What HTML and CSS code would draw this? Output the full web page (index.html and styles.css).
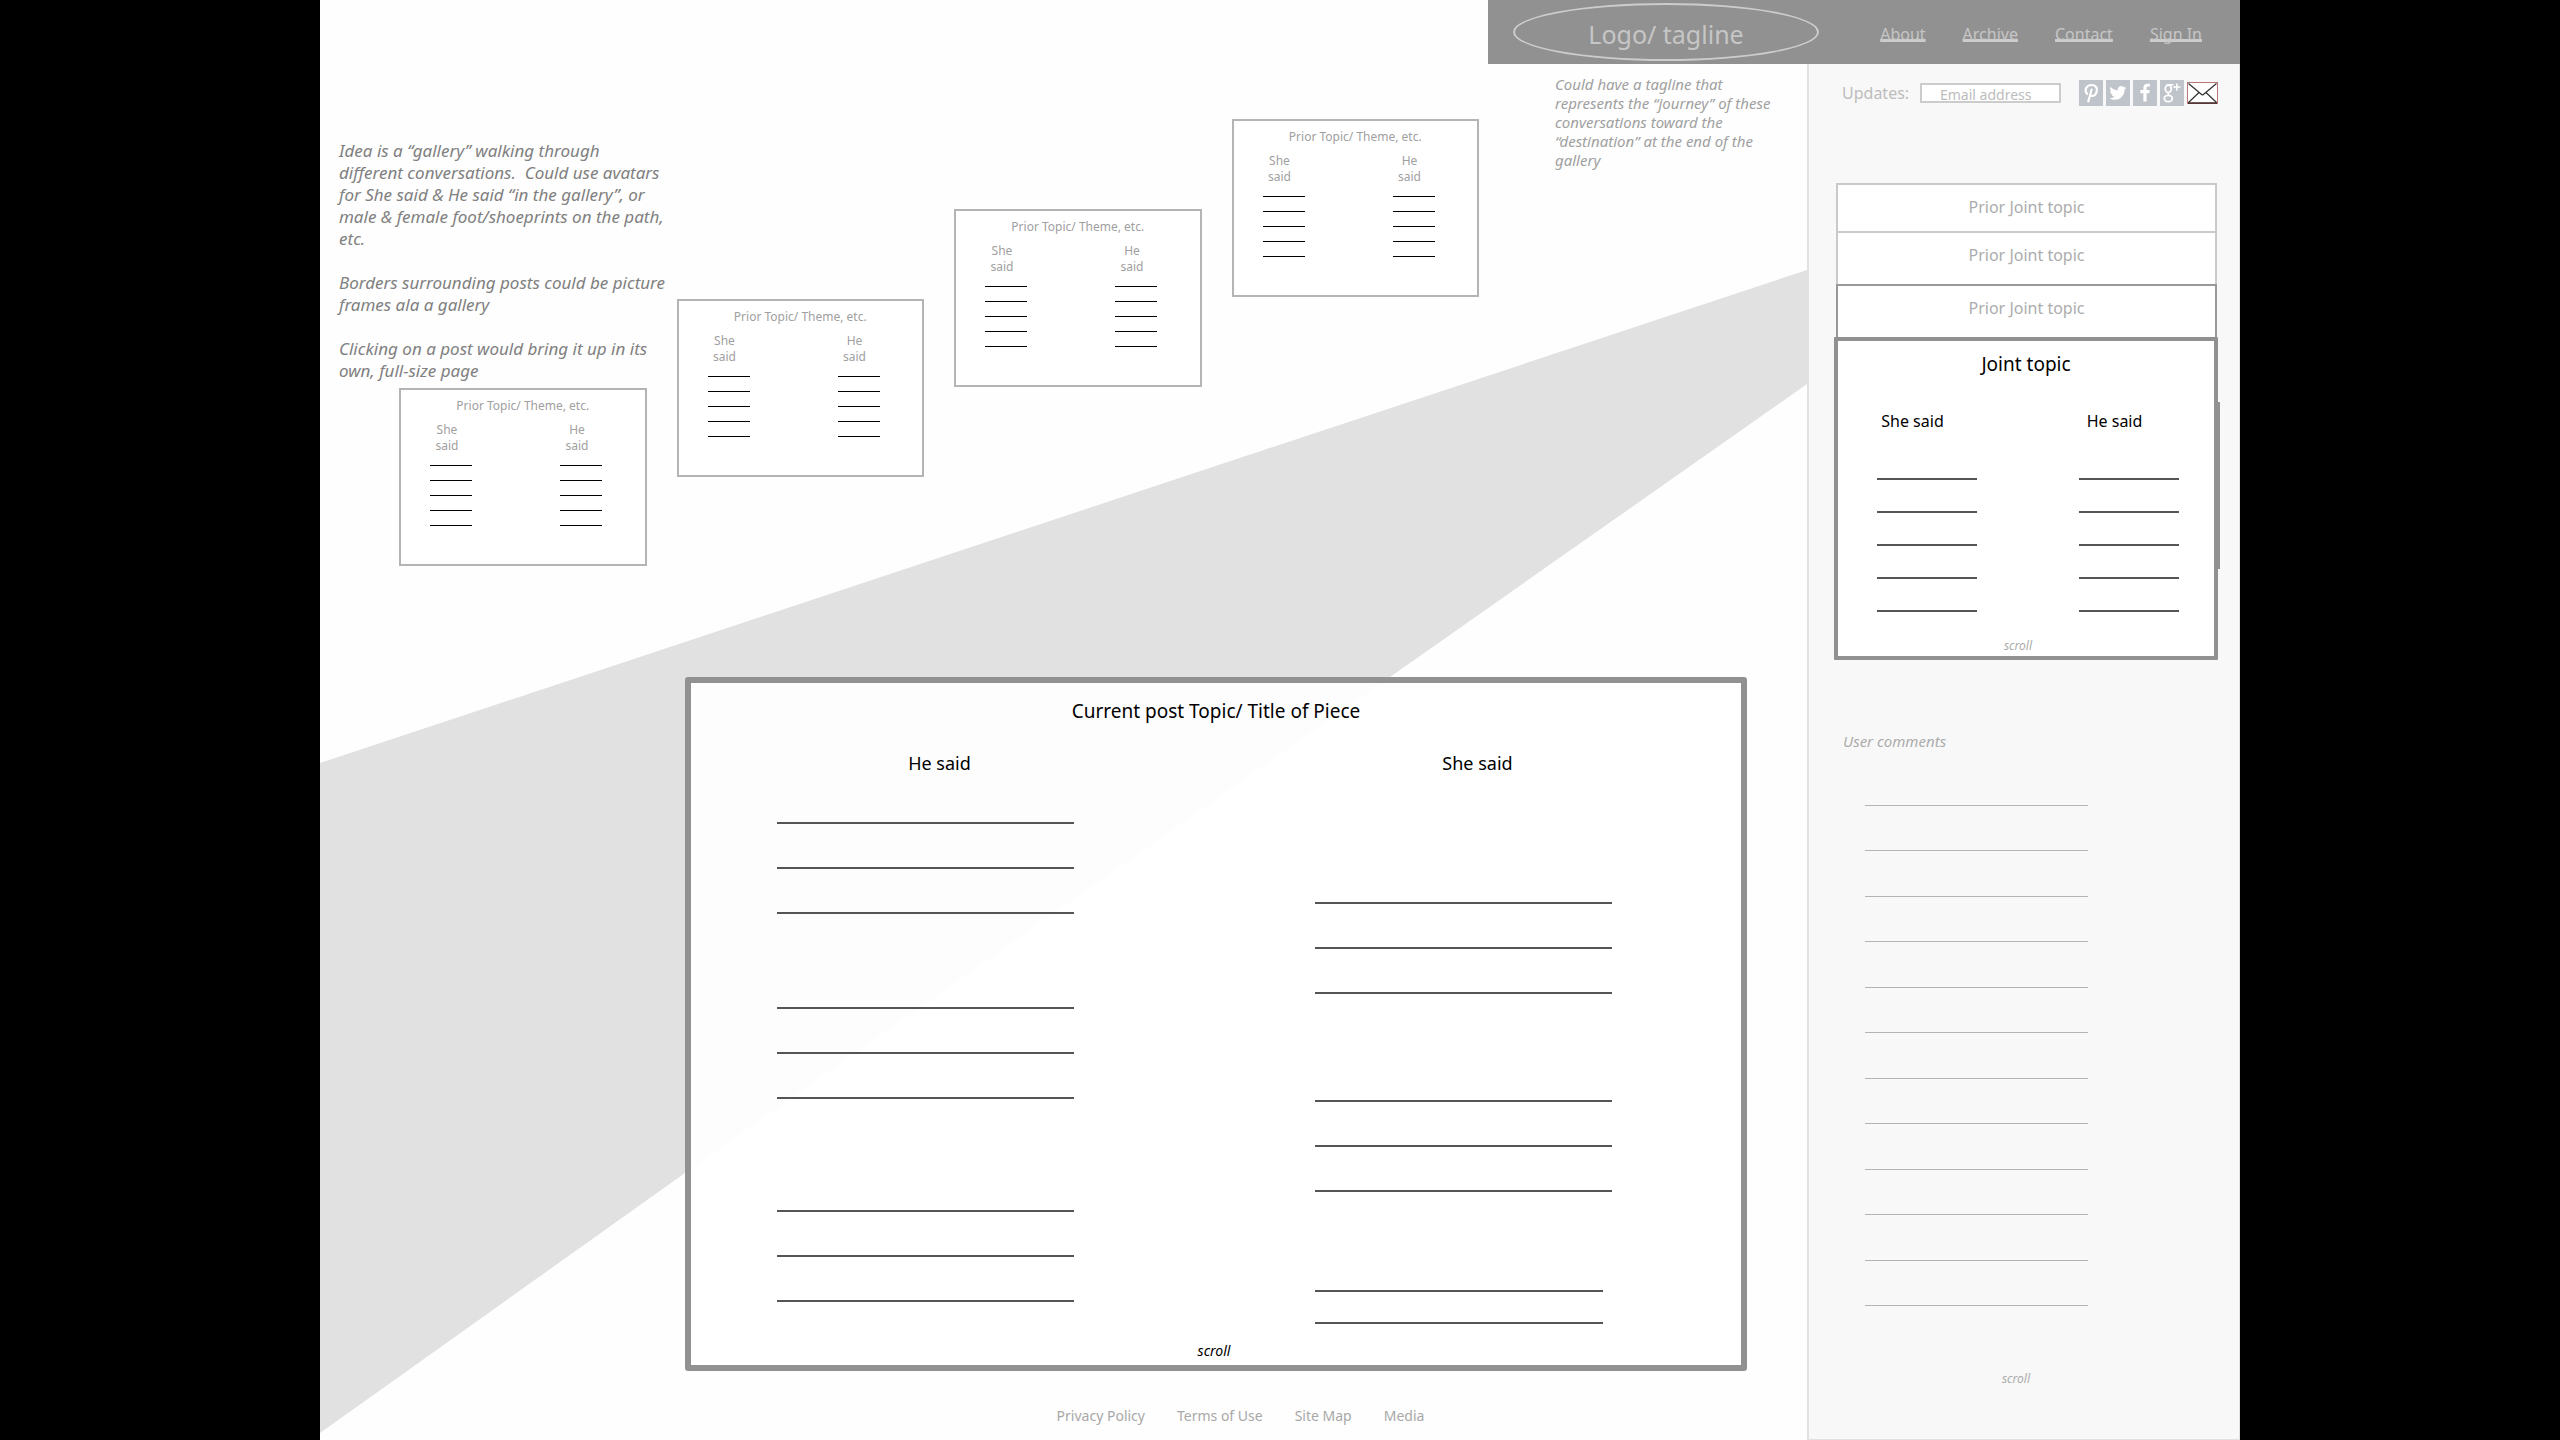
FILE: index.html
```
<!DOCTYPE html>
<html lang="en">
<head>
<meta charset="utf-8">
<meta name="viewport" content="width=device-width, initial-scale=1">
<title>She said / He said</title>
<link rel="stylesheet" href="styles.css">
</head>
<body>
<div class="page">
  <header class="topbar">
    <div class="topbar-inner">
      <a class="logo" href="#">Logo/ tagline</a>
      <nav class="topnav" aria-label="Main">
        <a href="#">About</a>
        <a href="#">Archive</a>
        <a href="#">Contact</a>
        <a href="#">Sign In</a>
      </nav>
    </div>
  </header>

  <main class="main">
    <svg class="path" viewBox="0 0 1487 1376" preserveAspectRatio="none" aria-hidden="true">
      <polygon points="0,699 1487,206 1487,320 1070,613 365,1109 0,1369" fill="#e1e1e1"/>
    </svg>

    <div class="hero">
      <div class="notes">
        <p>Idea is a “gallery” walking through<br>different conversations.&nbsp; Could use avatars<br>for She said &amp; He said “in the gallery”, or<br>male &amp; female foot/shoeprints on the path,<br>etc.</p>
        <p>Borders surrounding posts could be picture<br>frames ala a gallery</p>
        <p>Clicking on a post would bring it up in its<br>own, full-size page</p>
      </div>

      <div class="gallery">
        <article class="thumb">
          <h2>Prior Topic/ Theme, etc.</h2>
          <div class="thumb-cols">
            <section><h3>She<br>said</h3><ul class="rules"><li></li><li></li><li></li><li></li><li></li></ul></section>
            <section><h3>He<br>said</h3><ul class="rules"><li></li><li></li><li></li><li></li><li></li></ul></section>
          </div>
        </article>
        <article class="thumb">
          <h2>Prior Topic/ Theme, etc.</h2>
          <div class="thumb-cols">
            <section><h3>She<br>said</h3><ul class="rules"><li></li><li></li><li></li><li></li><li></li></ul></section>
            <section><h3>He<br>said</h3><ul class="rules"><li></li><li></li><li></li><li></li><li></li></ul></section>
          </div>
        </article>
        <article class="thumb">
          <h2>Prior Topic/ Theme, etc.</h2>
          <div class="thumb-cols">
            <section><h3>She<br>said</h3><ul class="rules"><li></li><li></li><li></li><li></li><li></li></ul></section>
            <section><h3>He<br>said</h3><ul class="rules"><li></li><li></li><li></li><li></li><li></li></ul></section>
          </div>
        </article>
        <article class="thumb">
          <h2>Prior Topic/ Theme, etc.</h2>
          <div class="thumb-cols">
            <section><h3>She<br>said</h3><ul class="rules"><li></li><li></li><li></li><li></li><li></li></ul></section>
            <section><h3>He<br>said</h3><ul class="rules"><li></li><li></li><li></li><li></li><li></li></ul></section>
          </div>
        </article>
      </div>

      <p class="tagline-note">Could have a tagline that<br>represents the “journey” of these<br>conversations toward the<br>“destination” at the end of the<br>gallery</p>
    </div>

    <article class="post">
      <h1>Current post Topic/ Title of Piece</h1>
      <div class="post-cols">
        <section>
          <h2>He said</h2>
          <ul class="rules"><li></li><li></li><li></li></ul>
          <ul class="rules gap-s"><li></li><li></li><li></li></ul>
          <ul class="rules gap-l"><li></li><li></li><li></li></ul>
        </section>
        <section class="reply">
          <h2>She said</h2>
          <ul class="rules"><li></li><li></li><li></li></ul>
          <ul class="rules gap-m"><li></li><li></li><li></li></ul>
          <ul class="rules gap-l closing"><li></li><li></li></ul>
        </section>
      </div>
      <p class="scroll">scroll</p>
    </article>

    <footer class="footer">
      <a href="#">Privacy Policy</a>
      <a href="#">Terms of Use</a>
      <a href="#">Site Map</a>
      <a href="#">Media</a>
    </footer>
  </main>

  <aside class="sidebar">
    <form class="updates">
      <label for="email">Updates:</label>
      <input id="email" type="email" placeholder="Email address">
      <div class="social">
        <a href="#" aria-label="Pinterest"><svg viewBox="0 0 24 26"><rect width="24" height="26" fill="#bfc4ca"/><path d="M9.300 21.500 12.600 9.500M8 13.800C4.800 10 7.500 5 12.500 5c4 0 6 2.500 5.300 6-.6 3.600-3 5.400-5 4.900-1.200-.3-1.700-1.200-1.700-1.200" fill="none" stroke="#fff" stroke-width="2.200" stroke-linecap="round"/></svg></a>
        <a href="#" aria-label="Twitter"><svg viewBox="0 0 24 26"><rect width="24" height="26" fill="#bfc4ca"/><path transform="translate(3.500 4.500) scale(.7)" d="M23.950 4.570a10 10 0 0 1-2.820.770 4.960 4.960 0 0 0 2.160-2.720c-.950.550-2 .950-3.130 1.180a4.920 4.920 0 0 0-8.380 4.480C7.690 8.090 4.070 6.130 1.640 3.160a4.920 4.920 0 0 0 1.520 6.570 4.900 4.900 0 0 1-2.230-.610v.060a4.920 4.920 0 0 0 3.950 4.830 5 5 0 0 1-2.210.080 4.930 4.930 0 0 0 4.600 3.420A9.870 9.870 0 0 1 0 19.540a14 14 0 0 0 7.550 2.210c9.050 0 14-7.500 14-13.980 0-.210 0-.420-.020-.630a9.940 9.940 0 0 0 2.460-2.550z" fill="#fff"/></svg></a>
        <a href="#" aria-label="Facebook"><svg viewBox="0 0 24 26"><rect width="24" height="26" fill="#bfc4ca"/><path d="M13.600 21.500v-8.300h2.700l.4-3.200h-3.100V8.100c0-.9.3-1.500 1.600-1.500h1.700V3.800c-.3 0-1.300-.1-2.500-.1-2.400 0-4 1.500-4 4.100V10H7.300v3.200h3.100v8.300z" fill="#fff"/></svg></a>
        <a href="#" aria-label="Google Plus"><svg viewBox="0 0 24 26"><rect width="24" height="26" fill="#bfc4ca"/><g fill="none" stroke="#fff"><ellipse cx="8.300" cy="8.700" rx="3" ry="3.700" stroke-width="1.800"/><path d="M13.500 4.800H9M9 12.400c-1.500 1.200-1 2 .5 2.900" stroke-width="1.600"/><ellipse cx="8.300" cy="18.500" rx="4" ry="3.200" stroke-width="1.800"/><path d="M16.800 3.500v7M13.300 7h7" stroke-width="1.600"/></g></svg></a>
        <a class="mail" href="#" aria-label="Email"><svg viewBox="0 0 31 22"><rect x=".5" y=".5" width="30" height="21" fill="#fff" stroke="#b87878"/><path d="M1.500 1.500 14 12q1.500 1.500 3 0L29.500 1.500M1.500 20.500 12 10.500M29.500 20.500 19 10.500" fill="none" stroke="#333" stroke-width="1.200"/><path d="M1 21h29" stroke="#3a2020" stroke-width="1.500"/></svg></a>
      </div>
    </form>

    <section class="stack">
      <ul class="prior">
        <li><a href="#">Prior Joint topic</a></li>
        <li><a href="#">Prior Joint topic</a></li>
        <li><a href="#">Prior Joint topic</a></li>
      </ul>
      <article class="joint">
        <h2>Joint topic</h2>
        <div class="joint-cols">
          <section><h3>She said</h3><ul class="rules"><li></li><li></li><li></li><li></li><li></li></ul></section>
          <section><h3>He said</h3><ul class="rules"><li></li><li></li><li></li><li></li><li></li></ul></section>
        </div>
        <p class="scroll">scroll</p>
      </article>
    </section>

    <section class="comments">
      <h2>User comments</h2>
      <ul class="rules"><li></li><li></li><li></li><li></li><li></li><li></li><li></li><li></li><li></li><li></li><li></li><li></li></ul>
      <p class="scroll">scroll</p>
    </section>
  </aside>
</div>
</body>
</html>
```
FILE: styles.css
```
* {
  box-sizing: border-box;
}

body,
h1,
h2,
h3,
p,
ul {
  margin: 0;
  padding: 0;
}

body {
  background: #000;
  font-family: "Noto Sans", "Open Sans", sans-serif;
  font-size: 16px;
  line-height: 22px;
  color: #000;
}

h1,
h2,
h3 {
  font-weight: 400;
}

ul {
  list-style: none;
}

a {
  color: inherit;
  text-decoration: none;
}

.page {
  display: grid;
  grid-template-columns: minmax(0, 1fr) 433px;
  grid-template-rows: auto 1fr;
  width: 75%;
  min-height: 100vh;
  margin: 0 auto;
  background: #fefefe;
}

/* Top bar */

.topbar {
  grid-column: 1 / -1;
  display: flex;
  justify-content: flex-end;
}

.topbar-inner {
  display: flex;
  align-items: center;
  justify-content: space-between;
  width: 752px;
  height: 64px;
  padding: 0 38px 0 25px;
  background: #919191;
  color: #c6c6c6;
}

.logo {
  display: flex;
  align-items: center;
  justify-content: center;
  width: 306px;
  height: 58px;
  padding-top: 4px;
  border: 2px solid #ccc;
  border-radius: 50%;
  font-size: 25px;
  line-height: 32px;
}

.topnav {
  display: flex;
  gap: 37px;
  padding-top: 4px;
}

.topnav a {
  text-decoration: underline 3px #ccc;
  text-underline-offset: -1px;
  text-decoration-skip-ink: none;
}

/* Gallery area */

.main {
  position: relative;
  isolation: isolate;
}

.path {
  position: absolute;
  inset: 0;
  z-index: -1;
  width: 100%;
  height: 100%;
}

.hero {
  display: grid;
}

.hero > * {
  grid-area: 1 / 1;
}

.notes {
  justify-self: start;
  padding: 76px 0 0 19px;
  font-size: 17px;
  font-style: italic;
  color: #808080;
}

.notes p + p {
  margin-top: 22px;
}

.tagline-note {
  justify-self: end;
  width: 224px;
  margin: 11px 28px 0 0;
  font-size: 15px;
  font-style: italic;
  line-height: 19px;
  color: #a0a0a0;
  white-space: nowrap;
}

.gallery {
  display: grid;
  grid-template-columns: repeat(4, minmax(0, 1fr));
  align-items: start;
  gap: 30px;
  padding: 55px 328px 0 79px;
}

.thumb {
  height: 178px;
  padding-top: 8px;
  border: 2px solid #b4b4b4;
  background: #fff;
  font-size: 12px;
  line-height: 16px;
  color: #a0a0a0;
  text-align: center;
}

.thumb:nth-child(1) {
  margin-top: 269px;
}

.thumb:nth-child(2) {
  margin-top: 180px;
}

.thumb:nth-child(3) {
  margin-top: 90px;
}

.thumb h2 {
  font-size: 12px;
}

.thumb-cols {
  display: grid;
  grid-template-columns: 42px 42px;
  gap: 88px;
  padding: 8px 0 0 29px;
}

.thumb-cols h3 {
  padding-right: 8px;
  font-size: 12px;
}

.rules li {
  border-bottom: 2px solid #555;
}

.thumb .rules li {
  height: 15px;
  border-bottom: 1px solid #000;
}

.thumb .rules li:first-child {
  height: 12px;
}

/* Current post */

.post {
  margin: 111px 60px 0 365px;
  padding: 16px 129px 4px 86px;
  border: 6px solid #919191;
  border-radius: 3px;
  background: rgba(255, 255, 255, 0.93);
}

.post h1 {
  padding-left: 43px;
  font-size: 19px;
  line-height: 24px;
  text-align: center;
}

.post-cols {
  display: grid;
  grid-template-columns: 1fr 1fr;
  gap: 241px;
  padding-top: 28px;
}

.post-cols h2 {
  margin-bottom: 4px;
  padding-left: 28px;
  font-size: 18px;
  line-height: 24px;
  text-align: center;
}

.post-cols .reply h2 {
  margin-bottom: 84px;
}

.post .rules li {
  height: 45px;
}

.post .gap-s {
  margin-top: 50px;
}

.post .gap-m {
  margin-top: 63px;
}

.post .gap-l {
  margin-top: 68px;
}

.post .closing li {
  width: 97%;
  height: 32px;
}

.scroll {
  font-size: 12px;
  font-style: italic;
  line-height: 16px;
  text-align: center;
}

.post .scroll {
  margin-top: 17px;
  padding-left: 39px;
  font-size: 14px;
  line-height: 20px;
}

.footer {
  display: flex;
  justify-content: center;
  gap: 32px;
  padding: 35px 0 14px 354px;
  font-size: 14px;
  line-height: 20px;
  color: #a8a8a8;
}

/* Sidebar */

.sidebar {
  border: solid #e1e1e1;
  border-width: 0 1px 1px 2px;
  background: #f8f8f8;
  color: #acacac;
}

.updates {
  display: flex;
  align-items: center;
  padding: 16px 22px 0 33px;
}

.updates label {
  width: 67px;
  color: #bcbcbc;
}

.updates input {
  width: 141px;
  height: 20px;
  margin: 0 18px 0 11px;
  padding: 3px 0 0 18px;
  border: 2px solid #ccc;
  background: #fff;
  font: 14px/16px "Noto Sans", "Open Sans", sans-serif;
}

.updates input::placeholder {
  color: #bcbcbc;
  opacity: 1;
}

.social {
  display: flex;
  align-items: center;
  gap: 3px;
}

.social svg {
  display: block;
  width: 24px;
  height: 26px;
}

.social .mail svg {
  width: 31px;
  height: 22px;
}

.stack {
  padding: 77px 21px 0 25px;
}

.prior {
  margin: 0 1px 0 2px;
  text-align: center;
}

.prior li {
  height: 53px;
  padding-top: 11px;
  border: 2px solid #cacaca;
  border-bottom: 0;
  background: #fff;
}

.prior li:first-child {
  height: 48px;
}

.prior li:last-child {
  border-color: #999;
}

.joint {
  position: relative;
  padding: 11px 35px 2px 39px;
  border: 4px solid #919191;
  border-radius: 1px;
  background: #fff;
}

/* Edge of the scroll thumb that sticks out past the frame */
.joint::after {
  content: "";
  position: absolute;
  top: 61px;
  right: -6px;
  bottom: 87px;
  width: 2px;
  background: #919191;
}

.joint h2 {
  padding-right: 4px;
  font-size: 19px;
  line-height: 24px;
  color: #000;
  text-align: center;
}

.joint-cols {
  display: grid;
  grid-template-columns: 1fr 1fr;
  gap: 102px;
  padding-top: 34px;
}

.joint-cols h3 {
  margin-bottom: 15px;
  padding-right: 29px;
  font-size: 16px;
  color: #000;
  text-align: center;
}

.joint .rules li {
  height: 33px;
}

.joint .scroll {
  margin-top: 26px;
  padding-right: 20px;
}

.comments {
  padding-top: 71px;
}

.comments h2 {
  padding-left: 34px;
  font-size: 15px;
  font-style: italic;
  line-height: 20px;
}

.comments .rules {
  display: grid;
  grid-auto-rows: 1fr;
  width: 223px;
  height: 546px;
  margin: 9px 0 0 56px;
}

.comments .rules li {
  border-bottom: 1px solid #b4b4b4;
}

.comments .scroll {
  margin-top: 65px;
  padding-right: 16px;
}
```
